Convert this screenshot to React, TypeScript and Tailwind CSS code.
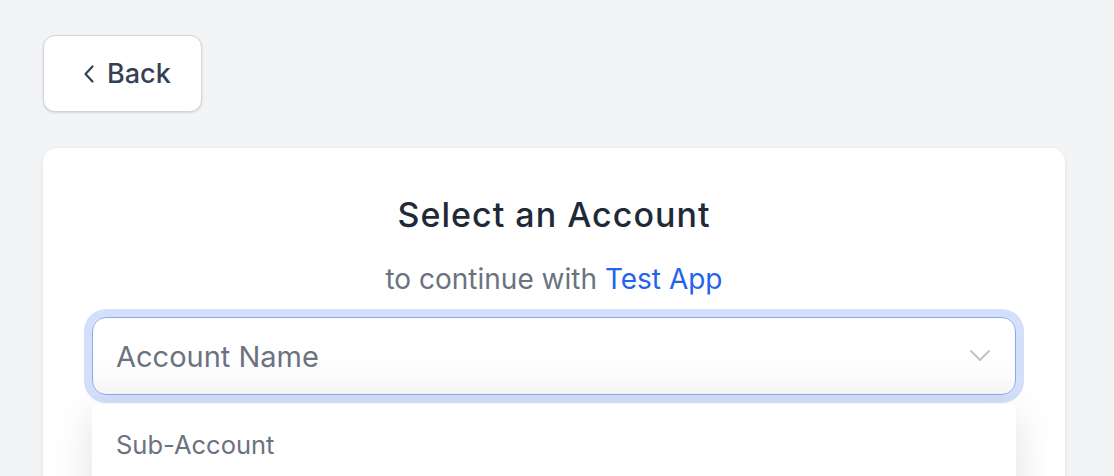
import React from "react";

export default function App() {
  return (
    <div
      className="h-[476px] w-[1114px] overflow-hidden bg-[#f3f4f6] pl-[43px] pt-[35px]"
      style={{ fontFamily: "Inter, 'Noto Sans', sans-serif" }}
    >
      <button className="flex h-[77px] w-[159px] items-center rounded-[12px] border border-[#d1d5db] bg-white pl-[39px] shadow-sm">
        <svg width="12" height="22" viewBox="0 0 12 22" fill="none" className="mr-[12px]">
          <path d="M9.5 3.5 L2.5 11 L9.5 18.5" stroke="#334155" strokeWidth="2.2" strokeLinecap="round" strokeLinejoin="round" />
        </svg>
        <span className="text-[27px] font-medium leading-none text-[#334155]">Back</span>
      </button>

      <div className="mt-[36px] h-[400px] w-[1022px] rounded-[14px] bg-white px-[49px] pt-[47px] shadow-[0_1px_4px_rgba(0,0,0,0.08)]">
        <h1 className="text-center text-[34px] font-medium leading-[40px] tracking-[0.03em] text-[#1f2937]">Select an Account</h1>
        <p className="mt-[27px] text-center text-[28px] leading-[34px] text-[#6b7280]">
          to continue with <span className="text-[#2563eb]">Test App</span>
        </p>
        <div className="relative mt-[21px]">
          <div className="flex h-[78px] items-center justify-between rounded-[14px] border-[1.5px] border-[#86a8f5] bg-gradient-to-b from-white from-50% to-[#f8f8f8] pl-[23px] pr-[24px] shadow-[0_0_0_8px_#d4e0fb]">
            <span className="text-[29px] leading-none text-[#6b7280]">Account Name</span>
            <svg width="22" height="14" viewBox="0 0 22 14" fill="none">
              <path d="M2 2 L11 11 L20 2" stroke="#c2c2c2" strokeWidth="2" strokeLinecap="round" strokeLinejoin="round" />
            </svg>
          </div>
          <div className="absolute left-0 right-0 top-[87px] h-[200px] rounded-[6px] bg-white px-[24px] pt-[28px] shadow-[0_10px_40px_rgba(0,0,0,0.12)]">
            <span className="text-[25.5px] leading-none text-[#6b7280]">Sub-Account</span>
          </div>
        </div>
      </div>
    </div>
  );
}
